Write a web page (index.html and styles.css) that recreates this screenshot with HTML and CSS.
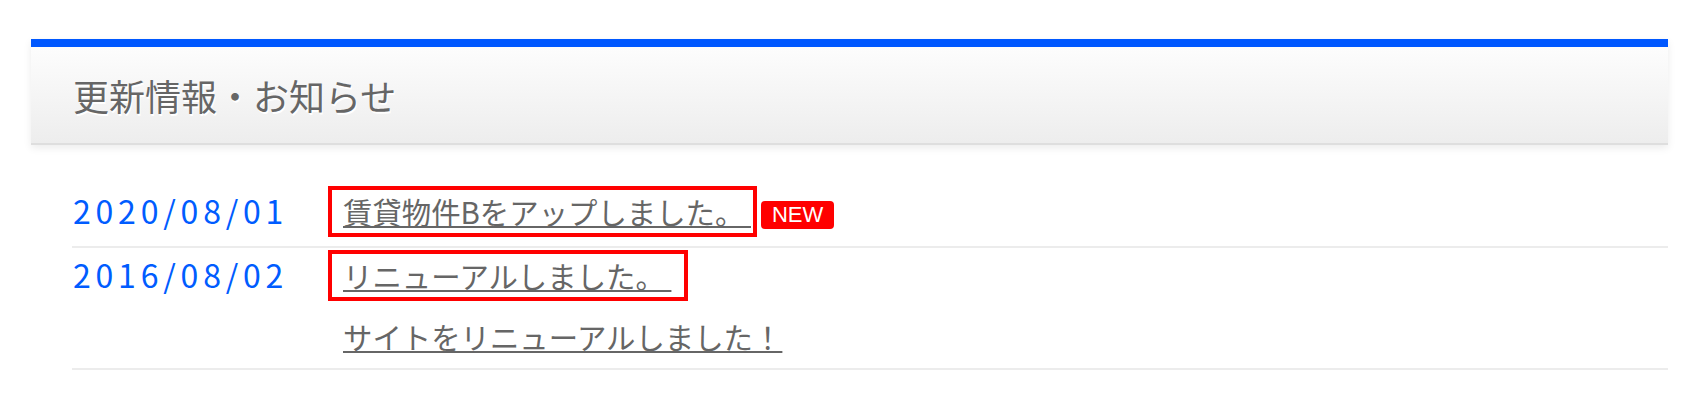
FILE: index.html
```html
<!DOCTYPE html>
<html lang="ja">
<head>
    <meta charset="UTF-8">
    <meta name="viewport" content="width=device-width, initial-scale=1.0">
    <title>更新情報・お知らせ</title>
    <link rel="stylesheet" href="styles.css">
</head>
<body>
    <section class="news">
        <h2 class="news-head">更新情報・お知らせ</h2>
        <dl class="news-list">
            <div class="news-row">
                <dt class="news-date">2020/08/01</dt>
                <dd class="news-body">
                    <a href="#" class="news-link boxed">賃貸物件Bをアップしました。&nbsp;</a><span class="badge">NEW</span>
                </dd>
            </div>
            <div class="news-row">
                <dt class="news-date">2016/08/02</dt>
                <dd class="news-body">
                    <a href="#" class="news-link boxed wide">リニューアルしました。&nbsp;</a>
                    <p class="news-text"><a href="#" class="news-link">サイトをリニューアルしました！</a></p>
                </dd>
            </div>
        </dl>
    </section>
</body>
</html>
```

FILE: styles.css
```css
body {
    margin: 0;
    background-color: #fff;
    font-family: "Noto Sans CJK JP", "Noto Sans", sans-serif;
    color: #666;
}
.news {
    padding: 39px 32px 0 31px;
}
.news-head {
    display: flex;
    align-items: center;
    height: 96px;
    margin: 0;
    padding-left: 42px;
    border-top: 8px solid #0058ff;
    border-bottom: 2px solid #dedede;
    background: linear-gradient(#fdfdfd, #ededed);
    box-shadow: 0 3px 8px rgba(0, 0, 0, 0.08);
    font-size: 36px;
    font-weight: normal;
    color: #666;
    text-shadow: 1px 2px 0 #fff;
}
.news-list {
    margin: 39px 0 0 41px;
    padding: 0;
}
.news-row {
    display: grid;
    grid-template-columns: 256px 1fr;
    align-items: baseline;
    padding: 2px 0 9px;
    border-bottom: 2px solid #ececec;
}
.news-date {
    padding-left: 1px;
    font-size: 32px;
    letter-spacing: 4.8px;
    color: #005cff;
}
.news-body {
    margin: 0;
    font-size: 29.4px;
    line-height: 45px;
}
.news-link {
    color: #666;
    text-decoration: underline;
}
.boxed {
    display: inline-block;
    padding: 0 2px 0 11px;
    border: 4px solid #ff0000;
    line-height: 43px;
}
.boxed.wide {
    padding-right: 13px;
}
.news-text {
    margin: 13px 0 0;
    padding-left: 15px;
}
.badge {
    display: inline-block;
    margin-left: 4px;
    padding: 0 11px;
    height: 28px;
    line-height: 28px;
    border-radius: 4px;
    background-color: #ff0000;
    color: #fff;
    font-family: "Liberation Sans", Arial, sans-serif;
    font-size: 22px;
    vertical-align: 2px;
}
```
